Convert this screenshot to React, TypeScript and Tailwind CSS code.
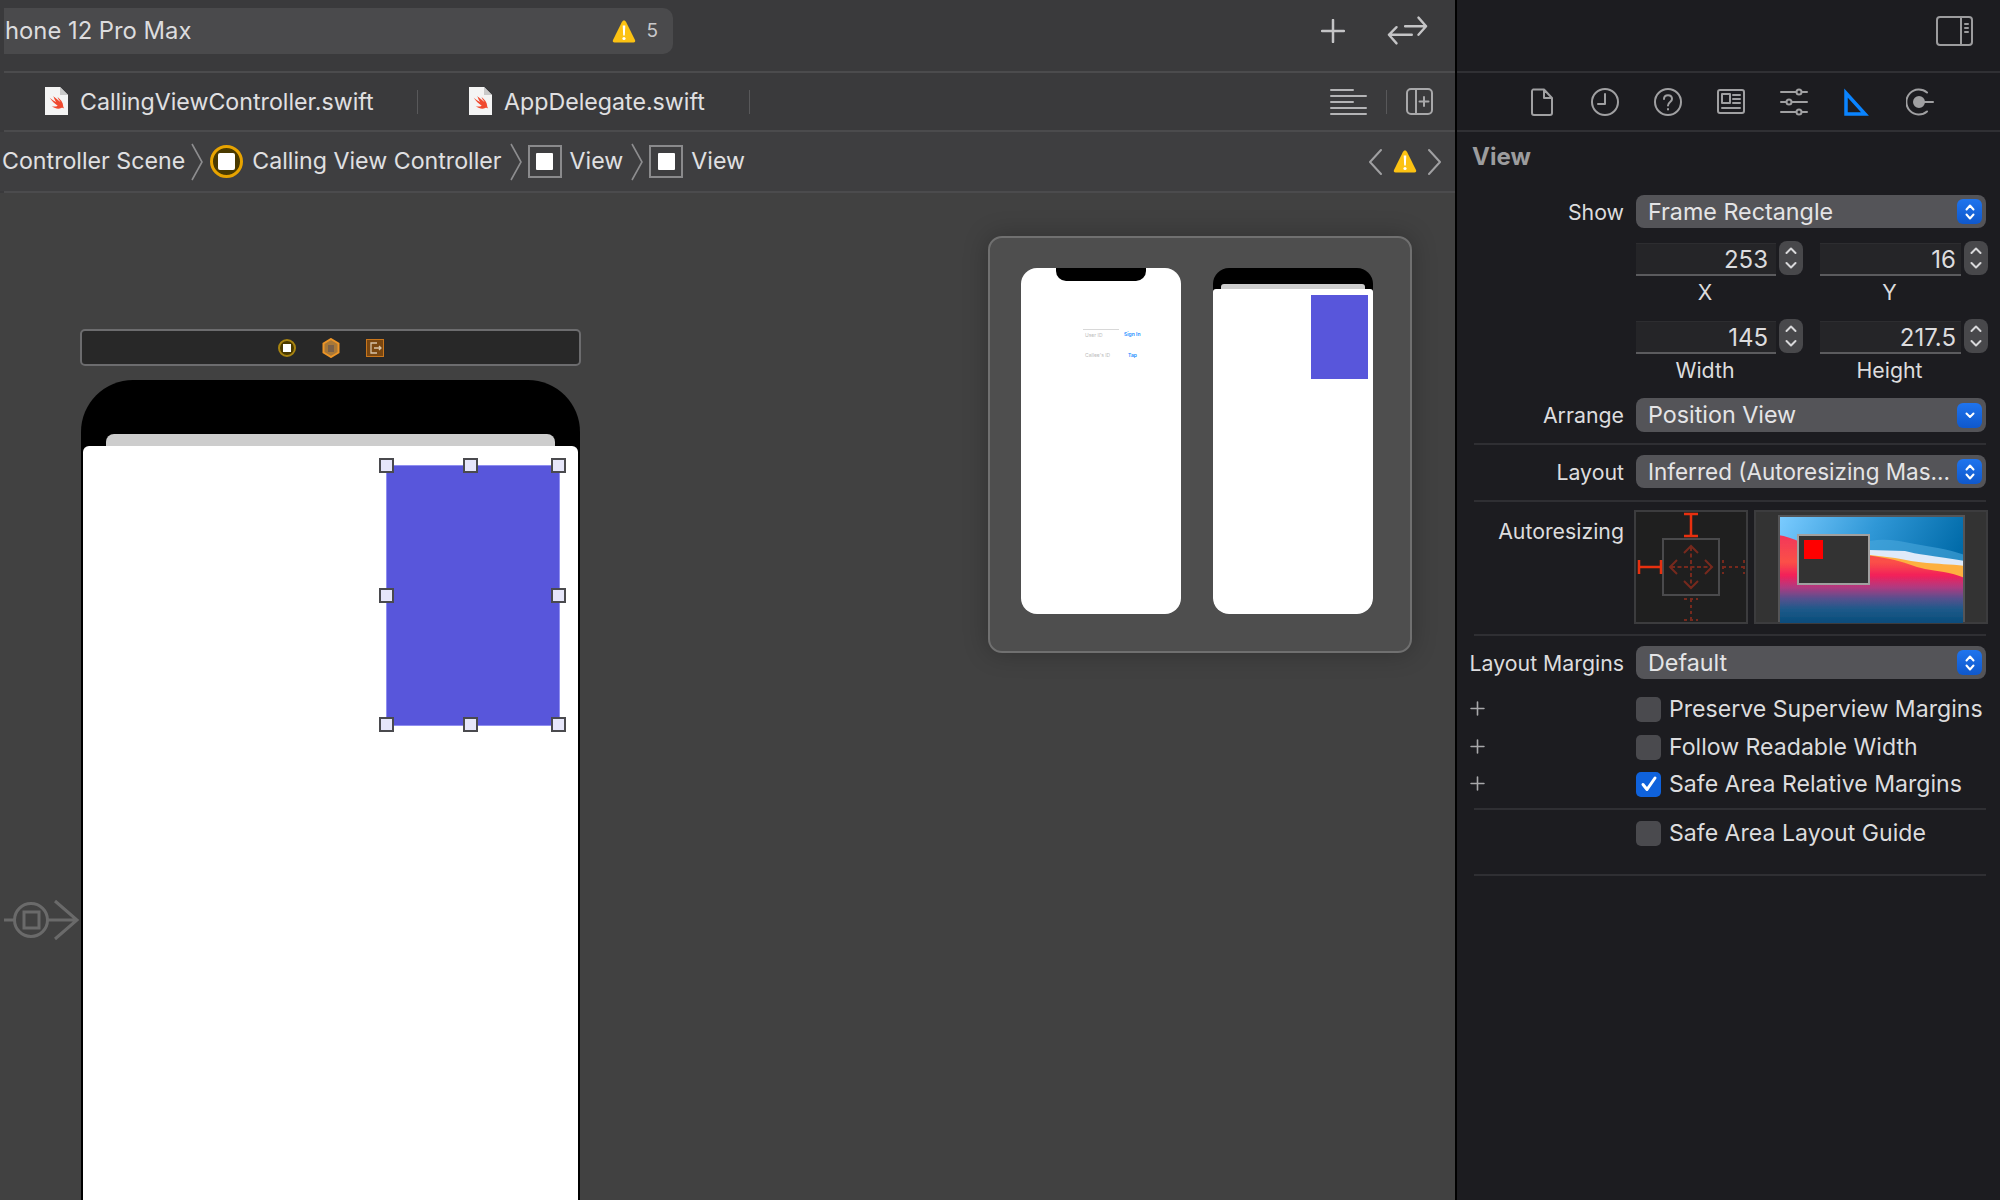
import React from "react";

const font = { fontFamily: '"Inter", "Liberation Sans", sans-serif' };

function Warn({ className }: { className?: string }) {
  return (
    <svg viewBox="0 0 24 25" className={className}>
      <path d="M12 1.5c1 0 1.6.6 2.1 1.6l8.9 18c.6 1.3 0 2.4-1.5 2.4H2.5C1 23.5.4 22.400 1 21.100l8.900-18C10.400 2.100 11 1.500 12 1.500z" fill="#fcc212" />
      <path d="M10.700 6.500h2.600l-.5 10h-1.600z" fill="#fff" />
      <circle cx="12" cy="19.500" r="1.600" fill="#fff" />
    </svg>
  );
}

function SwiftFile({ className }: { className?: string }) {
  return (
    <svg viewBox="0 0 25 30" className={className}>
      <path d="M1 1h15l8 8v20H1z" fill="#f4f4f4" />
      <path d="M16 1l8 8h-8z" fill="#c9c9c9" />
      <path d="M9 10c3 2.500 6 4.800 7.500 6-1.500-2-2.300-3.300-3-5 3 2.400 5.700 5.500 5.700 9 0 1 .5 1.500 1 2.500-1-.7-2-1-3-.5-2.500 1.200-6 .8-9.500-1.800 2 .5 4.500.5 6-.5-3-2-6-5-8-8 2 1.700 4.500 3.400 6.500 4.500-1.200-1.800-2.300-4-2.700-6.200z" fill="#f0492f" />
    </svg>
  );
}

function Stroke({ children, className, view = "0 0 28 28", color = "#a0a0a2", sw = 2 }: { children: React.ReactNode; className?: string; view?: string; color?: string; sw?: number }) {
  return (
    <svg viewBox={view} className={className} fill="none" stroke={color} strokeWidth={sw} strokeLinecap="round" strokeLinejoin="round">
      {children}
    </svg>
  );
}

function Chevrons({ single }: { single?: boolean }) {
  return (
    <span className="flex h-[25px] w-[25px] items-center justify-center rounded-[6px] bg-gradient-to-b from-[#1f74ee] to-[#0f58cc]">
      <svg viewBox="0 0 14 20" className="h-[20px] w-[14px]" fill="none" stroke="#fff" strokeWidth="2" strokeLinecap="round" strokeLinejoin="round">
        {single ? <path d="M3.500 8.500L7 12l3.500-3.500" /> : <path d="M3.500 7.500L7 3.500l3.500 4M3.500 12.500L7 16.500l3.500-4" />}
      </svg>
    </span>
  );
}

function Popup({ text, single, h = "h-[33px]", size = "text-[23.300px]" }: { text: string; single?: boolean; h?: string; size?: string }) {
  return (
    <div className={`flex ${h} w-[350px] items-center justify-between rounded-[8px] bg-[#545458] pl-[12px] pr-[4px] ${size} text-[#e4e4e6]`}>
      <span className="pt-[1px]">{text}</span>
      <Chevrons single={single} />
    </div>
  );
}

function Row({ label, children, className = "" }: { label?: string; children: React.ReactNode; className?: string }) {
  return (
    <div className={`flex ${className}`}>
      <div className="w-[167px] pt-[4px] text-right text-[21.300px] leading-[27px] text-[#dcdcde]">{label}</div>
      <div className="ml-[12px]">{children}</div>
    </div>
  );
}

function Sep({ className }: { className: string }) {
  return <div className={`ml-[17px] mr-[14px] h-[2px] bg-[#2f2f33] ${className}`} />;
}

function Stepper() {
  return (
    <span className="flex h-[34px] w-[24px] flex-col items-center justify-center rounded-[8px] bg-[#48484b]">
      <svg viewBox="0 0 14 26" className="h-[26px] w-[14px]" fill="none" stroke="#d8d8da" strokeWidth="2" strokeLinecap="round" strokeLinejoin="round">
        <path d="M2.500 8L7 3.500 11.500 8M2.500 18L7 22.500 11.500 18" />
      </svg>
    </span>
  );
}

function Field({ value, w, pr }: { value: string; w: string; pr: string }) {
  return (
    <div className="flex items-start">
      <div className={`mt-[2px] flex h-[33px] ${w} ${pr} items-center justify-end border-b-2 border-t border-b-[#5b5b5e] border-t-[#2d2d30] bg-[#252528] pt-[1px] text-[24px] text-[#dcdcde]`}>{value}</div>
      <div className="ml-[3px]"><Stepper /></div>
    </div>
  );
}

function Check({ label, on, plus, className }: { label: string; on?: boolean; plus?: boolean; className: string }) {
  return (
    <div className={`flex h-[30px] items-center ${className}`}>
      <div className="-mt-[2px] flex w-[179px] pl-[13px]">
        {plus && (
          <Stroke view="0 0 14 14" className="h-[15px] w-[15px]" color="#a8a8aa" sw={1.500}>
            <path d="M7 1v12M1 7h12" />
          </Stroke>
        )}
      </div>
      {on ? (
        <span className="flex h-[25px] w-[25px] items-center justify-center rounded-[5px] bg-[#0f62dc]">
          <svg viewBox="0 0 18 18" className="h-[18px] w-[18px]" fill="none" stroke="#fff" strokeWidth="3" strokeLinecap="round" strokeLinejoin="round">
            <path d="M3 9.500l4 5L15 3" />
          </svg>
        </span>
      ) : (
        <span className="h-[25px] w-[25px] rounded-[5px] bg-[#4a4a4e]" />
      )}
      <span className="ml-[8px] text-[23.100px] text-[#dcdcde]">{label}</span>
    </div>
  );
}

function Crumb() {
  return (
    <svg viewBox="0 0 12 38" className="h-[38px] w-[12px] shrink-0" fill="none" stroke="#8d8d8f" strokeWidth="1.600">
      <path d="M1 1l10 18L1 37" />
    </svg>
  );
}

function SquareIcon() {
  return (
    <span className="flex h-[33px] w-[34px] shrink-0 items-center justify-center border-2 border-[#8a8a8c] bg-[#3e3e40]">
      <span className="h-[17px] w-[17px] rounded-[1px] bg-white" />
    </span>
  );
}

function Handle({ className }: { className: string }) {
  return <span className={`absolute h-[15px] w-[15px] border-2 border-[#4a4a4e] bg-[#e6e6fa] ${className}`} />;
}

function Wallpaper() {
  return (
    <svg viewBox="0 0 183 106" preserveAspectRatio="none" className="h-[106px] w-[183px]">
      <defs>
        <linearGradient id="sky" x1="0" x2="1" y1="0" y2="0.300">
          <stop offset="0" stopColor="#7acbff" />
          <stop offset="0.500" stopColor="#2f97d6" />
          <stop offset="1" stopColor="#006aa8" />
        </linearGradient>
        <linearGradient id="land" x1="0" x2="0" y1="0" y2="1">
          <stop offset="0" stopColor="#f2365a" />
          <stop offset="0.300" stopColor="#fb5048" />
          <stop offset="0.450" stopColor="#f2205a" />
          <stop offset="0.580" stopColor="#b03a80" />
          <stop offset="0.700" stopColor="#5a4f8e" />
          <stop offset="0.820" stopColor="#1f5a8a" />
          <stop offset="1" stopColor="#044a78" />
        </linearGradient>
        <filter id="soft" x="-5%" y="-5%" width="110%" height="110%">
          <feGaussianBlur stdDeviation="0.700" />
        </filter>
      </defs>
      <rect width="183" height="106" fill="url(#sky)" />
      <g filter="url(#soft)">
        <path d="M90 24c15-3 30 0 45 3s30 4 50 11v8L90 36z" fill="#4aa6dc" opacity="0.600" />
        <path d="M90 33l35 1c10 3 30 5 60 10v14l-95 0z" fill="#dfeaf9" />
        <path d="M90 38l25 3c12 2 20 4 32 5 10 1 22 1 38 3v16l-95 0z" fill="#fdb03f" />
        <path d="M-2 18c15 2 30 12 50 15 20 3 42 5 62 9 12 2 25 8 35 10 12 2 25 3 40 9v47H-2z" fill="url(#land)" />
      </g>
    </svg>
  );
}

function StrutBox() {
  const bright = "#e8300f";
  const dim = "#76291d";
  return (
    <svg viewBox="0 0 114 114" className="h-[114px] w-[114px]" fill="none">
      <rect x="29" y="29" width="56" height="56" stroke="#4a4a4c" strokeWidth="2" />
      <g stroke={bright} strokeWidth="2.500">
        <path d="M50 4h14M50 26h14M57 4v22" />
        <path d="M5 50v14M27 50v14M5 57h22" />
      </g>
      <g stroke={dim} strokeWidth="2">
        <path d="M57 37v40M37 57h40" strokeDasharray="4 2.500" />
        <path d="M50 43l7-7 7 7M50 71l7 7 7-7M43 50l-7 7 7 7M71 50l7 7-7 7" />
        <path d="M89 50v14M110 50v14M89 57h21M50 89h14M50 110h14M57 89v21" strokeDasharray="3 3" />
      </g>
    </svg>
  );
}

export default function App() {
  return (
    <div className="flex h-[1200px] w-[2000px] overflow-hidden bg-[#3a3a3c]" style={font}>
      <main className="flex w-[1455px] shrink-0 flex-col">
        <header className="flex h-[71px] items-start pl-1 pt-[8px]">
          <div className="flex h-[46px] w-[669px] items-center rounded-r-[10px] bg-[#4a4a4c] pl-[1px] text-[23.800px] text-[#dcdcde]">
            <span>hone 12 Pro Max</span>
            <Warn className="ml-auto h-[25px] w-[24px]" />
            <span className="ml-[10px] mr-[15px] text-[19px] text-[#c8c8ca]">5</span>
          </div>
          <Stroke view="0 0 24 24" className="ml-[648px] mt-[11px] h-[24px] w-[24px]" color="#c4c4c6" sw={2.500}>
            <path d="M12 1v22M1 12h22" />
          </Stroke>
          <Stroke view="0 0 43 31" className="ml-[42px] mt-[7px] h-[31px] w-[41px]" color="#c4c4c6" sw={2.500}>
            <path d="M19 11h22M33 2l8 9-8 9M26 20H2M10 12l-8 8 8 9" />
          </Stroke>
        </header>
        <div className="ml-1 h-[2px] bg-[#4b4b4d]" />
        <nav className="flex h-[57px] items-center text-[23.200px] text-[#e0e0e2]">
          <div className="flex w-[417px] items-center pl-[44px]">
            <SwiftFile className="h-[30px] w-[25px]" />
            <span className="ml-[11px] pt-[1px]">CallingViewController.swift</span>
          </div>
          <span className="h-[24px] w-[1px] bg-[#58585a]" />
          <div className="ml-[50px] flex w-[281px] items-center">
            <SwiftFile className="h-[30px] w-[25px]" />
            <span className="ml-[11px] pt-[1px]">AppDelegate.swift</span>
          </div>
          <span className="h-[24px] w-[1px] bg-[#58585a]" />
          <Stroke view="0 0 37 27" className="ml-auto h-[27px] w-[37px]" color="#b4b4b6" sw={2}>
            <path d="M1 2h22M1 8h35M1 14h22M1 20h35M1 26h35" />
          </Stroke>
          <span className="ml-[19px] mr-[19px] h-[24px] w-[1px] bg-[#58585a]" />
          <Stroke view="0 0 27 27" className="mr-[22px] h-[27px] w-[27px]" color="#a8a8aa" sw={2}>
            <rect x="1" y="1" width="25" height="25" rx="4" />
            <path d="M10 1v25M18 9v9M13.500 13.500h9" />
          </Stroke>
        </nav>
        <div className="ml-1 h-[2px] bg-[#4b4b4d]" />
        <nav className="flex h-[59px] items-center bg-[#3e3e40] pl-[2px] text-[23.200px] text-[#e0e0e2]">
          <span>Controller Scene</span>
          <span className="ml-[6px]"><Crumb /></span>
          <span className="ml-[7px] flex h-[33px] w-[33px] shrink-0 items-center justify-center rounded-full border-[3px] border-[#e8a400] bg-[#4a3a00]">
            <span className="h-[17px] w-[17px] rounded-[2px] bg-white" />
          </span>
          <span className="ml-[9px]">Calling View Controller</span>
          <span className="ml-[8px]"><Crumb /></span>
          <span className="ml-[6px]"><SquareIcon /></span>
          <span className="ml-[8px]">View</span>
          <span className="ml-[8px]"><Crumb /></span>
          <span className="ml-[6px]"><SquareIcon /></span>
          <span className="ml-[8px]">View</span>
          <Stroke view="0 0 14 28" className="ml-auto h-[28px] w-[14px]" color="#a0a0a2">
            <path d="M13 2L2 14l11 12" />
          </Stroke>
          <Warn className="ml-[11px] h-[25px] w-[24px]" />
          <Stroke view="0 0 14 28" className="ml-[11px] mr-[13px] h-[28px] w-[14px]" color="#a0a0a2">
            <path d="M1 2l11 12L1 26" />
          </Stroke>
        </nav>
        <div className="ml-1 h-[2px] bg-[#4b4b4d]" />
        <section className="relative min-h-0 flex-1 overflow-hidden bg-[#414141]">
          <div className="ml-[80px] mt-[136px] flex h-[37px] w-[501px] items-center justify-center gap-[26px] rounded-[5px] border-2 border-[#6c6c6e] bg-[#282828]">
            <span className="flex h-[18px] w-[18px] items-center justify-center rounded-full border-2 border-[#a88410] bg-[#4a3a00]">
              <span className="h-[8px] w-[8px] bg-white" />
            </span>
            <svg viewBox="0 0 18 20" className="h-[20px] w-[18px]">
              <path d="M9 1l7.500 4.500v9L9 19l-7.500-4.500v-9z" fill="#a87838" stroke="#ee9526" strokeWidth="2" />
              <path d="M6 7h6v7H6z" fill="#7a6048" />
            </svg>
            <svg viewBox="0 0 18 18" className="h-[18px] w-[18px]" fill="none">
              <rect x="0.500" y="0.500" width="17" height="17" fill="#7a4710" stroke="#c9761c" />
              <path d="M11 4H5v10h6M8 9h7M13 7l2 2-2 2" stroke="#d8c4a8" strokeWidth="1.300" />
            </svg>
          </div>
          <div className="ml-[81px] mt-[14px] flex h-[900px] w-[499px] flex-col rounded-t-[52px] bg-black pt-[54px]">
            <div className="mx-[25px] h-[12px] shrink-0 rounded-t-[8px] bg-[#cdcdcd]" />
            <div className="relative mx-[2px] flex-1 rounded-t-[6px] bg-white">
              <div className="absolute left-[303px] top-[19px] h-[261px] w-[174px] border border-[#8f8ef0] bg-[#5856db]">
                <Handle className="-left-[8px] -top-[8px]" />
                <Handle className="left-[76px] -top-[8px]" />
                <Handle className="left-[164px] -top-[8px]" />
                <Handle className="-left-[8px] top-[122px]" />
                <Handle className="left-[164px] top-[122px]" />
                <Handle className="-left-[8px] top-[251px]" />
                <Handle className="left-[76px] top-[251px]" />
                <Handle className="left-[164px] top-[251px]" />
              </div>
            </div>
          </div>

          <svg viewBox="0 0 80 46" className="absolute left-[3px] top-[704px] h-[46px] w-[80px]" fill="none" stroke="#6a6a6a" strokeWidth="3">
            <path d="M1 23h10M45 23h29M52 4l22 19-22 19" />
            <circle cx="28" cy="23" r="16.500" />
            <rect x="21" y="15" width="15" height="16" />
          </svg>

          <div className="absolute left-[988px] top-[43px] flex h-[417px] w-[424px] gap-[32px] rounded-[14px] border-2 border-[#707070] bg-[#4e4e4e] pl-[31px] pt-[30px] shadow-[0_0_24px_rgba(0,0,0,0.25)]">
            <div className="relative h-[346px] w-[160px] rounded-[16px] bg-white pl-[62px] pt-[60px]">
              <div className="absolute left-[35px] top-0 h-[13px] w-[90px] rounded-b-[10px] bg-black" />
              <div className="flex h-[14px] items-center gap-[5px]">
                <span className="flex h-[13px] w-[36px] items-center border-t border-[#d8d8d8] pl-[2px] text-[5px] text-[#bbbbbb]">User ID</span>
                <span className="text-[5px] font-semibold text-[#1a8cff]">Sign In</span>
              </div>
              <div className="mt-[7px] flex h-[14px] items-center gap-[9px]">
                <span className="flex h-[13px] w-[36px] items-center pl-[2px] text-[5px] text-[#bbbbbb]">Callee's ID</span>
                <span className="text-[5px] font-semibold text-[#1a8cff]">Tap</span>
              </div>
            </div>
            <div className="flex h-[346px] w-[160px] flex-col rounded-[16px] bg-black pt-[16px]">
              <div className="mx-[8px] h-[5px] shrink-0 rounded-t-[3px] bg-[#cdcdcd]" />
              <div className="relative flex-1 rounded-b-[16px] rounded-t-[3px] bg-white">
                <div className="absolute left-[98px] top-[6px] h-[84px] w-[57px] bg-[#5856db]" />
              </div>
            </div>
          </div>
        </section>
      </main>

      <div className="w-[2px] shrink-0 bg-black" />

      <aside className="flex min-w-0 flex-1 flex-col bg-[#1c1c20]">
        <div className="flex h-[71px] items-start justify-end pr-[27px] pt-[16px]">
          <Stroke view="0 0 37 30" className="h-[30px] w-[37px]" color="#9c9c9e" sw={2}>
            <rect x="1" y="1" width="35" height="28" rx="3" />
            <path d="M25 1v28M29 8h3M29 12h3M29 16h3" />
          </Stroke>
        </div>
        <div className="h-[2px] bg-[#303034]" />
        <div className="flex h-[57px] items-center pl-[53px]">
          <span className="flex w-[63px] justify-center">
            <Stroke className="h-[28px] w-[28px]">
              <path d="M5 1.500h11L24 10v15a2 2 0 0 1-2 2H6a2 2 0 0 1-2-2V3a2 2 0 0 1 1-1.500zM16 1.500V10h8" />
            </Stroke>
          </span>
          <span className="flex w-[63px] justify-center">
            <Stroke className="h-[28px] w-[28px]">
              <circle cx="14" cy="14" r="13" />
              <path d="M14 6v10H7" />
            </Stroke>
          </span>
          <span className="flex w-[63px] justify-center">
            <Stroke className="h-[28px] w-[28px]">
              <circle cx="14" cy="14" r="13" />
              <path d="M10 11c0-5 8-5 8 0 0 3-4 3-4 6.500" />
              <path d="M14 21v.500" />
            </Stroke>
          </span>
          <span className="flex w-[63px] justify-center">
            <Stroke className="h-[28px] w-[28px]">
              <rect x="1" y="2" width="26" height="23" rx="2" />
              <rect x="5" y="6" width="8" height="9" />
              <path d="M16 7h7M16 11h7M16 15h7M5 20h18" />
            </Stroke>
          </span>
          <span className="flex w-[63px] justify-center">
            <Stroke className="h-[28px] w-[28px]">
              <path d="M1 4h15M22 4h5M1 14h5M12 14h15M1 24h15M22 24h5" />
              <circle cx="19" cy="4" r="2.500" />
              <circle cx="9" cy="14" r="2.500" />
              <circle cx="19" cy="24" r="2.500" />
            </Stroke>
          </span>
          <span className="flex w-[63px] justify-center">
            <svg viewBox="0 0 28 28" className="h-[28px] w-[28px]" fill="none" stroke="#0a84ff" strokeWidth="3.500" strokeLinejoin="miter">
              <path d="M3 5v21h19z" />
            </svg>
          </span>
          <span className="flex w-[63px] justify-center">
            <svg viewBox="0 0 28 28" className="h-[28px] w-[28px]" fill="none" stroke="#a0a0a2" strokeWidth="2" strokeLinecap="round">
              <path d="M21 4.500A12.500 12.500 0 1 0 21 23.500" />
              <circle cx="13" cy="14" r="5" fill="#a0a0a2" />
              <path d="M13 14h14" />
            </svg>
          </span>
        </div>
        <div className="h-[2px] bg-[#303034]" />

        <div className="ml-[15px] mt-[10px] h-[30px] text-[24px] font-bold leading-[30px] text-[#9c9c9e]">View</div>

        <Row label="Show" className="mt-[23px]"><Popup text="Frame Rectangle" /></Row>
        <div className="ml-[179px] mt-[13px] flex h-[35px] gap-[17px]">
          <Field value="253" w="w-[140px]" pr="pr-[8px]" />
          <Field value="16" w="w-[141px]" pr="pr-[5px]" />
        </div>
        <div className="ml-[178px] mt-[4px] flex h-[24px] gap-[44px] text-center text-[21.300px] leading-[24px] text-[#dcdcde]">
          <span className="w-[140px]">X</span>
          <span className="w-[141px]">Y</span>
        </div>
        <div className="ml-[179px] mt-[15px] flex h-[35px] gap-[17px]">
          <Field value="145" w="w-[140px]" pr="pr-[8px]" />
          <Field value="217.5" w="w-[141px]" pr="pr-[5px]" />
        </div>
        <div className="ml-[178px] mt-[4px] flex h-[24px] gap-[44px] text-center text-[21.300px] leading-[24px] text-[#dcdcde]">
          <span className="w-[140px]">Width</span>
          <span className="w-[141px]">Height</span>
        </div>
        <Row label="Arrange" className="mt-[16px]"><Popup text="Position View" single h="h-[34px]" /></Row>
        <Sep className="mt-[11px]" />
        <Row label="Layout" className="mt-[10px]"><Popup text="Inferred (Autoresizing Mas..." size="text-[22.500px]" /></Row>
        <Sep className="mt-[12px]" />
        <div className="mt-[8px] flex h-[114px]">
          <div className="w-[167px] pt-[8px] text-right text-[21.300px] leading-[27px] text-[#dcdcde]">Autoresizing</div>
          <div className="ml-[10px] h-[114px] w-[114px] border-2 border-[#3c3c3e] bg-[#1f1f1f]"><div className="-m-[2px]"><StrutBox /></div></div>
          <div className="ml-[6px] flex h-[114px] w-[234px] justify-center border-2 border-[#3c3c3e] bg-[#333333] pt-[3px]">
            <div className="relative h-[107px] border-x-2 border-t-2 border-[#555557]">
              <Wallpaper />
              <div className="absolute left-[17px] top-[17px] h-[51px] w-[73px] border-2 border-[#a0a0a0] bg-[#333333]">
                <div className="ml-[5px] mt-[4px] h-[19px] w-[19px] bg-[#ff0000]" />
              </div>
            </div>
          </div>
        </div>
        <Sep className="mt-[10px]" />
        <Row label="Layout Margins" className="mt-[10px]"><Popup text="Default" /></Row>
        <Check label="Preserve Superview Margins" plus className="mt-[15px]" />
        <Check label="Follow Readable Width" plus className="mt-[8px]" />
        <Check label="Safe Area Relative Margins" plus on className="mt-[7px]" />
        <Sep className="mt-[9px]" />
        <Check label="Safe Area Layout Guide" className="mt-[8px]" />
        <Sep className="mt-[26px]" />
      </aside>
    </div>
  );
}
